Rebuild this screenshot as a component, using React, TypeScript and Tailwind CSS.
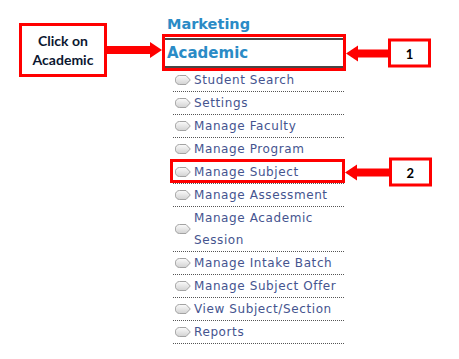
import React from 'react';

const items: { label: string; lines?: string[]; mark?: string }[] = [
  { label: 'Student Search' },
  { label: 'Settings' },
  { label: 'Manage Faculty' },
  { label: 'Manage Program' },
  { label: 'Manage Subject', mark: '2' },
  { label: 'Manage Assessment' },
  { label: 'Manage Academic Session', lines: ['Manage Academic', 'Session'] },
  { label: 'Manage Intake Batch' },
  { label: 'Manage Subject Offer' },
  { label: 'View Subject/Section' },
  { label: 'Reports' },
];

const Bullet = () => (
  <svg width="16" height="10" viewBox="0 0 16 10" className="shrink-0">
    <defs>
      <linearGradient id="bg" x1="0" y1="0" x2="0" y2="1">
        <stop offset="0" stopColor="#fbfbfb" />
        <stop offset="1" stopColor="#d2d2d2" />
      </linearGradient>
    </defs>
    <path d="M4.5 0.5 H11 L15.3 5 L11 9.5 H4.5 A4.2 4.5 0 0 1 4.5 0.5 Z" fill="url(#bg)" stroke="#a3a3a3" strokeWidth="1" />
  </svg>
);

// red block arrows
const ArrowLeft = ({ length }: { length: number }) => (
  <svg width={length} height="18" viewBox={`0 0 ${length} 18`} className="shrink-0">
    <polygon points={`0,9 12,1 12,5 ${length},5 ${length},13 12,13 12,17`} fill="#ff0000" />
  </svg>
);

const ArrowRight = ({ length }: { length: number }) => (
  <svg width={length} height="18" viewBox={`0 0 ${length} 18`} className="shrink-0">
    <polygon points={`${length},9 ${length - 12},1 ${length - 12},5 0,5 0,13 ${length - 12},13 ${length - 12},17`} fill="#ff0000" />
  </svg>
);

// numbered callout pointing left at a highlighted item
const Callout = ({ n, length }: { n: string; length: number }) => (
  <div className="absolute left-full top-1/2 -translate-y-1/2 flex items-center">
    <ArrowLeft length={length} />
    <div className="w-[43px] h-[29px] border-[3px] border-[#ff0000] flex items-center justify-center font-['Lato',sans-serif] font-bold text-[13px] text-black bg-white">
      {n}
    </div>
  </div>
);

export default function App() {
  return (
    <div className="w-[459px] h-[359px] bg-white overflow-hidden flex font-['DejaVu_Sans',sans-serif]">
      {/* annotation: click on academic */}
      <div className="flex items-center self-start mt-[23px] ml-[19px]">
        <div className="w-[88px] h-[54px] border-[3px] border-[#ff0000] flex items-center justify-center text-center font-['Lato',sans-serif] font-bold text-[14px] leading-[19px] text-[#0b1730]">
          Click on
          <br />
          Academic
        </div>
        <ArrowRight length={55} />
      </div>

      {/* menu column */}
      <div className="mt-[14px] w-[179px] ml-[3px]">
        <div className="pl-[2px] h-[20px] text-[14.5px] font-bold text-[#2a8bc6] leading-[20px]">Marketing</div>
        <div className="relative mt-[4px] border-y-[2px] border-[#474747] h-[30px] pl-[2px] text-[15px] font-bold text-[#2a8bc6] leading-[26px]">
          Academic
          <div className="absolute -left-[3px] -right-[2px] -top-[6px] -bottom-[5px] border-[3px] border-[#ff0000]" />
          <div className="absolute right-[-2px] top-1/2 -translate-y-1/2 h-0">
            <Callout n="1" length={42} />
          </div>
        </div>
        <div className="ml-[8px] mt-[1px] w-[171px]">
          {items.map((it) => (
            <div
              key={it.label}
              className="relative flex items-center gap-[3px] pl-[2px] border-b border-dotted border-[#555] text-[12px] tracking-[0.6px] text-[#45548f] leading-[22px]"
            >
              <Bullet />
              <div>
                {(it.lines ?? [it.label]).map((l) => (
                  <div key={l}>{l}</div>
                ))}
              </div>
              {it.mark && (
                <>
                  <div className="absolute -left-[3px] -right-[1px] -top-[2px] -bottom-[0px] border-[3px] border-[#ff0000]" />
                  <div className="absolute right-[-1px] top-1/2 -translate-y-1/2 h-0">
                    <Callout n={it.mark} length={44} />
                  </div>
                </>
              )}
            </div>
          ))}
        </div>
      </div>
    </div>
  );
}
